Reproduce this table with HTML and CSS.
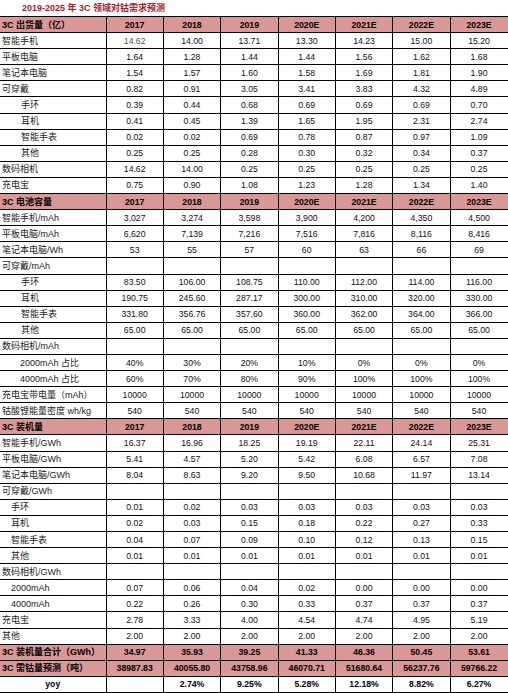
FILE: index.html
```html
<!DOCTYPE html>
<html lang="zh">
<head>
<meta charset="utf-8">
<title>2019-2025 年 3C 领域对钴需求预测</title>
<link rel="stylesheet" href="styles.css">
</head>
<body>
<div class="title">2019-2025 年 3C 领域对钴需求预测</div>
<table class="grid">
<colgroup><col class="c-label"><col><col><col><col><col><col><col></colgroup>
<tbody>
<tr class="sec"><td class="lab">3C 出货量（亿）</td><td>2017</td><td>2018</td><td>2019</td><td>2020E</td><td>2021E</td><td>2022E</td><td>2023E</td></tr>
<tr><td class="lab">智能手机</td><td class="light">14.62</td><td>14.00</td><td>13.71</td><td>13.30</td><td>14.23</td><td>15.00</td><td>15.20</td></tr>
<tr><td class="lab">平板电脑</td><td>1.64</td><td>1.28</td><td>1.44</td><td>1.44</td><td>1.56</td><td>1.62</td><td>1.68</td></tr>
<tr><td class="lab">笔记本电脑</td><td>1.54</td><td>1.57</td><td>1.60</td><td>1.58</td><td>1.69</td><td>1.81</td><td>1.90</td></tr>
<tr><td class="lab">可穿戴</td><td>0.82</td><td>0.91</td><td>3.05</td><td>3.41</td><td>3.83</td><td>4.32</td><td>4.89</td></tr>
<tr><td class="lab in1">手环</td><td>0.39</td><td>0.44</td><td>0.68</td><td>0.69</td><td>0.69</td><td>0.69</td><td>0.70</td></tr>
<tr><td class="lab in1">耳机</td><td>0.41</td><td>0.45</td><td>1.39</td><td>1.65</td><td>1.95</td><td>2.31</td><td>2.74</td></tr>
<tr><td class="lab in1">智能手表</td><td>0.02</td><td>0.02</td><td>0.69</td><td>0.78</td><td>0.87</td><td>0.97</td><td>1.09</td></tr>
<tr><td class="lab in1">其他</td><td>0.25</td><td>0.25</td><td>0.28</td><td>0.30</td><td>0.32</td><td>0.34</td><td>0.37</td></tr>
<tr><td class="lab">数码相机</td><td>14.62</td><td>14.00</td><td>0.25</td><td>0.25</td><td>0.25</td><td>0.25</td><td>0.25</td></tr>
<tr><td class="lab">充电宝</td><td>0.75</td><td>0.90</td><td>1.08</td><td>1.23</td><td>1.28</td><td>1.34</td><td>1.40</td></tr>

<tr class="sec"><td class="lab">3C 电池容量</td><td>2017</td><td>2018</td><td>2019</td><td>2020E</td><td>2021E</td><td>2022E</td><td>2023E</td></tr>
<tr><td class="lab">智能手机/mAh</td><td>3,027</td><td>3,274</td><td>3,598</td><td>3,900</td><td>4,200</td><td>4,350</td><td>4,500</td></tr>
<tr><td class="lab">平板电脑/mAh</td><td>6,620</td><td>7,139</td><td>7,216</td><td>7,516</td><td>7,816</td><td>8,116</td><td>8,416</td></tr>
<tr><td class="lab">笔记本电脑/Wh</td><td>53</td><td>55</td><td>57</td><td>60</td><td>63</td><td>66</td><td>69</td></tr>
<tr><td class="lab">可穿戴/mAh</td><td></td><td></td><td></td><td></td><td></td><td></td><td></td></tr>
<tr><td class="lab in1">手环</td><td>83.50</td><td>106.00</td><td>108.75</td><td>110.00</td><td>112.00</td><td>114.00</td><td>116.00</td></tr>
<tr><td class="lab in1">耳机</td><td>190.75</td><td>245.60</td><td>287.17</td><td>300.00</td><td>310.00</td><td>320.00</td><td>330.00</td></tr>
<tr><td class="lab in1">智能手表</td><td>331.80</td><td>356.76</td><td>357.60</td><td>360.00</td><td>362.00</td><td>364.00</td><td>366.00</td></tr>
<tr><td class="lab in1">其他</td><td>65.00</td><td>65.00</td><td>65.00</td><td>65.00</td><td>65.00</td><td>65.00</td><td>65.00</td></tr>
<tr><td class="lab">数码相机/mAh</td><td></td><td></td><td></td><td></td><td></td><td></td><td></td></tr>
<tr><td class="lab in1b">2000mAh 占比</td><td>40%</td><td>30%</td><td>20%</td><td>10%</td><td>0%</td><td>0%</td><td>0%</td></tr>
<tr><td class="lab in1b">4000mAh 占比</td><td>60%</td><td>70%</td><td>80%</td><td>90%</td><td>100%</td><td>100%</td><td>100%</td></tr>
<tr><td class="lab">充电宝带电量（mAh）</td><td>10000</td><td>10000</td><td>10000</td><td>10000</td><td>10000</td><td>10000</td><td>10000</td></tr>
<tr><td class="lab">钴酸锂能量密度 wh/kg</td><td>540</td><td>540</td><td>540</td><td>540</td><td>540</td><td>540</td><td>540</td></tr>

<tr class="sec"><td class="lab">3C 装机量</td><td>2017</td><td>2018</td><td>2019</td><td>2020E</td><td>2021E</td><td>2022E</td><td>2023E</td></tr>
<tr><td class="lab">智能手机/GWh</td><td>16.37</td><td>16.96</td><td>18.25</td><td>19.19</td><td>22.11</td><td>24.14</td><td>25.31</td></tr>
<tr><td class="lab">平板电脑/GWh</td><td>5.41</td><td>4.57</td><td>5.20</td><td>5.42</td><td>6.08</td><td>6.57</td><td>7.08</td></tr>
<tr><td class="lab">笔记本电脑/GWh</td><td>8.04</td><td>8.63</td><td>9.20</td><td>9.50</td><td>10.68</td><td>11.97</td><td>13.14</td></tr>
<tr><td class="lab">可穿戴/GWh</td><td></td><td></td><td></td><td></td><td></td><td></td><td></td></tr>
<tr><td class="lab in2">手环</td><td>0.01</td><td>0.02</td><td>0.03</td><td>0.03</td><td>0.03</td><td>0.03</td><td>0.03</td></tr>
<tr><td class="lab in2">耳机</td><td>0.02</td><td>0.03</td><td>0.15</td><td>0.18</td><td>0.22</td><td>0.27</td><td>0.33</td></tr>
<tr><td class="lab in2">智能手表</td><td>0.04</td><td>0.07</td><td>0.09</td><td>0.10</td><td>0.12</td><td>0.13</td><td>0.15</td></tr>
<tr><td class="lab in2">其他</td><td>0.01</td><td>0.01</td><td>0.01</td><td>0.01</td><td>0.01</td><td>0.01</td><td>0.01</td></tr>
<tr><td class="lab">数码相机/GWh</td><td></td><td></td><td></td><td></td><td></td><td></td><td></td></tr>
<tr><td class="lab in2">2000mAh</td><td>0.07</td><td>0.06</td><td>0.04</td><td>0.02</td><td>0.00</td><td>0.00</td><td>0.00</td></tr>
<tr><td class="lab in2">4000mAh</td><td>0.22</td><td>0.26</td><td>0.30</td><td>0.33</td><td>0.37</td><td>0.37</td><td>0.37</td></tr>
<tr><td class="lab">充电宝</td><td>2.78</td><td>3.33</td><td>4.00</td><td>4.54</td><td>4.74</td><td>4.95</td><td>5.19</td></tr>
<tr><td class="lab">其他</td><td>2.00</td><td>2.00</td><td>2.00</td><td>2.00</td><td>2.00</td><td>2.00</td><td>2.00</td></tr>
<tr class="tot"><td class="lab">3C 装机量合计（GWh）</td><td>34.97</td><td>35.93</td><td>39.25</td><td>41.33</td><td>46.36</td><td>50.45</td><td>53.61</td></tr>
<tr class="tot"><td class="lab">3C 需钴量预测（吨）</td><td>38987.83</td><td>40055.80</td><td>43758.96</td><td>46070.71</td><td>51680.64</td><td>56237.76</td><td>59766.22</td></tr>
<tr class="yoy"><td>yoy</td><td></td><td>2.74%</td><td>9.25%</td><td>5.28%</td><td>12.18%</td><td>8.82%</td><td>6.27%</td></tr>
</tbody>
</table>
</body>
</html>
```

FILE: styles.css
```css
html, body {
  margin: 0;
  padding: 0;
  background: #ffffff;
}

body {
  font-family: "Liberation Sans", "Noto Sans CJK SC", sans-serif;
  color: #111;
  width: 508px;
  overflow: hidden;
}

.title {
  height: 16px;
  line-height: 16px;
  padding-left: 22px;
  font-size: 9px;
  font-weight: bold;
  color: #b3161f;
  box-sizing: border-box;
}

.grid {
  border-collapse: collapse;
  table-layout: fixed;
  width: 507.5px;
  font-size: 8.7px;
}

.c-label {
  width: 106px;
}

.grid tr {
  height: 16.1px;
}

.grid td {
  border: 1px solid #000;
  padding: 0;
  text-align: center;
  vertical-align: middle;
  white-space: nowrap;
  overflow: hidden;
  line-height: 10px;
}

.grid tr td:first-child {
  border-left: none;
}

.grid tr td:last-child {
  border-right: none;
}

.grid td.lab {
  text-align: left;
  padding-left: 2px;
  font-size: 9px;
  color: #222;
}

.grid td.in1 {
  padding-left: 21px;
}

.grid td.in1b {
  padding-left: 20px;
}

.grid td.in2 {
  padding-left: 11px;
}

.grid td.light {
  color: #555;
}

.sec td,
.tot td {
  background: #d99795;
  font-weight: bold;
  color: #000;
}

.grid .sec td.lab,
.grid .tot td.lab {
  color: #000;
  font-weight: bold;
}

.yoy td {
  font-weight: bold;
  color: #000;
}
```
